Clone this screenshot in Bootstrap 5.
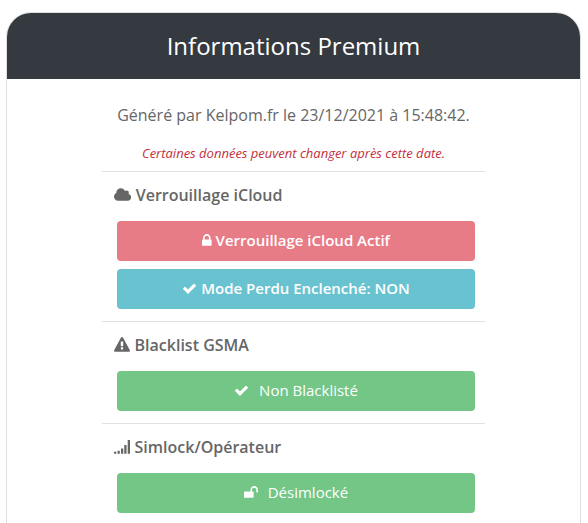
<!DOCTYPE html>
<html lang="fr">
<head>
<meta charset="utf-8">
<meta name="viewport" content="width=device-width, initial-scale=1">
<title>Informations Premium</title>
<link href="https://cdn.jsdelivr.net/npm/bootstrap@5.3.0/dist/css/bootstrap.min.css" rel="stylesheet">
<style>
html { scrollbar-width: none; }
body { font-family: "Open Sans", sans-serif; color: #666; background: #fff; overflow-x: hidden; }
.report { margin: 12px 7px 12px 6px; border: 1px solid #dfdfdf; border-radius: 25px; overflow: hidden; }
.report-head { background: #343a40; padding: 18px 16px; }
.report-head h1 { font-size: 24px; line-height: 30px; }
.report-body { width: 67%; padding-bottom: 24px; }
.generated { font-size: 16px; line-height: 24px; margin-top: 24px; }
.notice { font-size: 13px; line-height: 18px; margin: 17px 0 9px; color: #c4303c; }
.section-block { border-top: 1px solid #dfe1e3; padding: 11px 10px 12px 12px; }
.section-block h2 { font-size: 16px; line-height: 24px; margin-bottom: 14px; font-weight: 600; gap: 5px; }
.status { --bs-btn-font-size: 15px; --bs-btn-border-radius: 4px; padding: 7px 12px 9px; line-height: 24px; }
.status-list { padding-left: 3px; }
.status-danger, .status-danger:hover { background: #e77c86; color: #fff; }
.status-info, .status-info:hover { background: #69c2d0; color: #fff; }
.status-ok, .status-ok:hover { background: #73c686; color: #fff; }
.status-ok { gap: 10px; }
.glyph { height: 1em; fill: currentColor; flex: none; }
</style>
<script src="https://cdn.jsdelivr.net/npm/bootstrap@5.3.0/dist/js/bootstrap.bundle.min.js"></script>
</head>
<body>
<main class="report">
  <header class="report-head text-white text-center">
    <h1 class="m-0 fw-normal">Informations Premium</h1>
  </header>
  <div class="report-body mx-auto">
    <p class="generated text-center mb-0">Généré par Kelpom.fr le 23/12/2021 à 15:48:42.</p>
    <p class="notice text-center fst-italic">Certaines données peuvent changer après cette date.</p>

    <section class="section-block">
      <h2 class="d-flex align-items-center">
        <svg class="glyph" viewBox="64 0 1920 1792" aria-hidden="true"><path d="M1984 1152q0 159-112.500 271.500t-271.500 112.500h-1088q-185 0-316.500-131.500t-131.500-316.500q0-132 71-241.500t187-163.500q-2-28-2-43 0-212 150-362t362-150q158 0 286.500 88t187.500 230q70-62 166-62 106 0 181 75t75 181q0 75-41 138 129 30 213 134.500t84 239.500z"/></svg>
        <span>Verrouillage iCloud</span>
      </h2>
      <div class="status-list d-grid gap-2">
        <button type="button" class="btn status status-danger border-0 fw-semibold d-flex align-items-center justify-content-center gap-1">
          <svg class="glyph" viewBox="320 0 1152 1792" aria-hidden="true"><path d="M640 768h512v-192q0-106-75-181t-181-75-181 75-75 181v192zm832 96v576q0 40-28 68t-68 28h-960q-40 0-68-28t-28-68v-576q0-40 28-68t68-28h32v-192q0-184 132-316t316-132 316 132 132 316v192h32q40 0 68 28t28 68z"/></svg>
          <span>Verrouillage iCloud Actif</span>
        </button>
        <button type="button" class="btn status status-info border-0 fw-semibold d-flex align-items-center justify-content-center gap-1">
          <svg class="glyph" viewBox="0 0 1792 1792" aria-hidden="true"><path d="M1671 566q0 40-28 68l-724 724-136 136q-28 28-68 28t-68-28l-136-136-362-362q-28-28-28-68t28-68l136-136q28-28 68-28t68 28l294 295 656-657q28-28 68-28t68 28l136 136q28 28 28 68z"/></svg>
          <span>Mode Perdu Enclenché: NON</span>
        </button>
      </div>
    </section>

    <section class="section-block">
      <h2 class="d-flex align-items-center">
        <svg class="glyph" viewBox="0 0 1792 1792" aria-hidden="true"><path d="M1024 1375v-190q0-14-9.500-23.500t-22.500-9.500h-192q-13 0-22.500 9.500t-9.500 23.500v190q0 14 9.500 23.500t22.500 9.500h192q13 0 22.500-9.500t9.500-23.500zm-2-374l18-459q0-12-10-19-13-11-24-11h-220q-11 0-24 11-10 7-10 21l17 457q0 10 10 16.500t24 6.500h185q14 0 23.500-6.500t10.500-16.500zm-14-934l768 1408q35 63-2 126-17 29-46.500 46t-63.500 17h-1536q-34 0-63.500-17t-46.500-46q-37-63-2-126l768-1408q17-31 47-49t65-18 65 18 47 49z"/></svg>
        <span>Blacklist GSMA</span>
      </h2>
      <div class="status-list d-grid gap-2">
        <button type="button" class="btn status status-ok border-0 d-flex align-items-center justify-content-center">
          <svg class="glyph" viewBox="0 0 1792 1792" aria-hidden="true"><path d="M1671 566q0 40-28 68l-724 724-136 136q-28 28-68 28t-68-28l-136-136-362-362q-28-28-28-68t28-68l136-136q28-28 68-28t68 28l294 295 656-657q28-28 68-28t68 28l136 136q28 28 28 68z"/></svg>
          <span>Non Blacklisté</span>
        </button>
      </div>
    </section>

    <section class="section-block">
      <h2 class="d-flex align-items-center">
        <svg class="glyph" viewBox="0 0 1792 1792" aria-hidden="true"><path d="M0 1440h256v224h-256zM392 1312h256v352h-256zM784 1056h256v608h-256zM1150 680h256v984h-256zM1536 120h256v1544h-256z"/></svg>
        <span>Simlock/Opérateur</span>
      </h2>
      <div class="status-list d-grid gap-2">
        <button type="button" class="btn status status-ok border-0 d-flex align-items-center justify-content-center">
          <svg class="glyph" viewBox="64 0 1664 1792" aria-hidden="true"><path d="M1728 576v256q0 26-19 45t-45 19h-64q-26 0-45-19t-19-45v-256q0-106-75-181t-181-75-181 75-75 181v192h96q40 0 68 28t28 68v576q0 40-28 68t-68 28h-960q-40 0-68-28t-28-68v-576q0-40 28-68t68-28h672v-192q0-185 131.500-316.500t316.500-131.500 316.500 131.500 131.500 316.500z"/></svg>
          <span>Désimlocké</span>
        </button>
      </div>
    </section>
  </div>
</main>
</body>
</html>
